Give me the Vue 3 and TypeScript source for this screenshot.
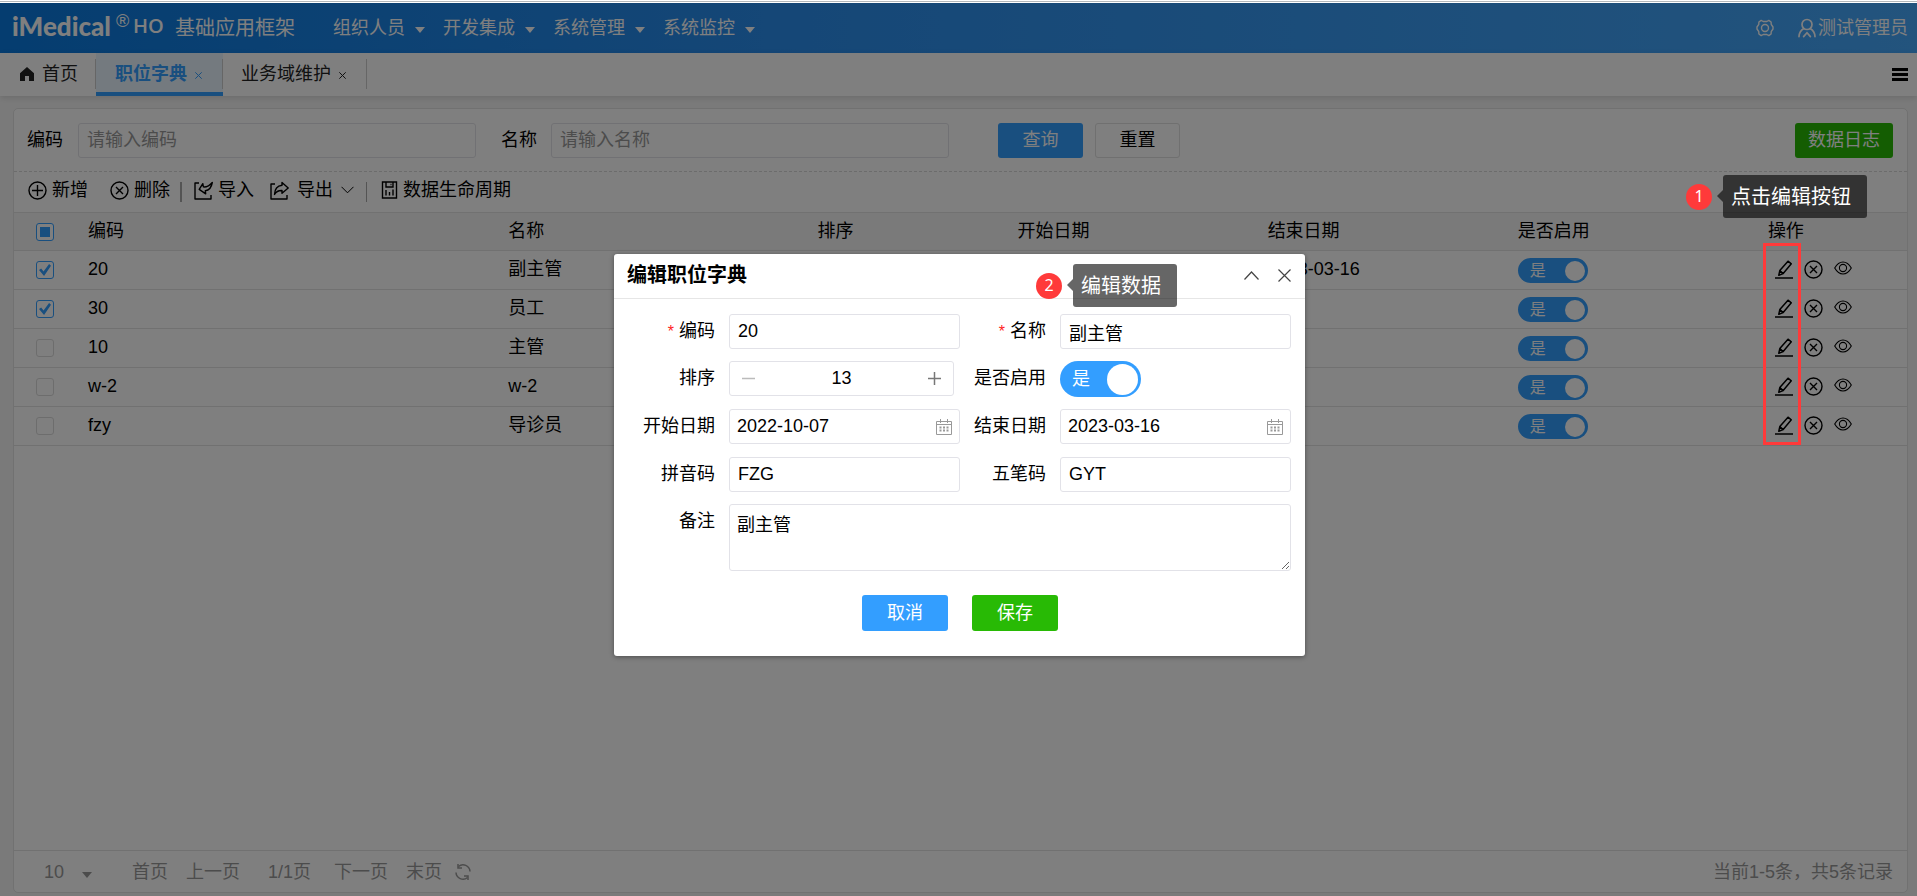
<script setup lang="ts">
import { ref, computed } from 'vue'

interface Row {
  code: string
  name: string
  sort: string
  start: string
  end: string
  enabled: boolean
  checked: boolean
}

const menus: string[] = ['组织人员', '开发集成', '系统管理', '系统监控']
const rows = ref<Row[]>([
  { code: '20', name: '副主管', sort: '13', start: '2022-10-07', end: '2023-03-16', enabled: true, checked: true },
  { code: '30', name: '员工', sort: '', start: '', end: '', enabled: true, checked: true },
  { code: '10', name: '主管', sort: '', start: '', end: '', enabled: true, checked: false },
  { code: 'w-2', name: 'w-2', sort: '', start: '', end: '', enabled: true, checked: false },
  { code: 'fzy', name: '导诊员', sort: '', start: '', end: '', enabled: true, checked: false }
])
const allChecked = computed(() => rows.value.every(r => r.checked))
const someChecked = computed(() => !allChecked.value && rows.value.some(r => r.checked))

const query = ref({ code: '', name: '' })
const form = ref({
  code: '20',
  name: '副主管',
  sort: 13,
  enabled: true,
  start: '2022-10-07',
  end: '2023-03-16',
  pinyin: 'FZG',
  wubi: 'GYT',
  remark: '副主管'
})
const pageSize = ref('10')
</script>

<template>
  <div class="edge"></div>
  <div class="app">
    <header class="topbar">
      <div class="logo"><b>iMedical</b><sup>®</sup><span>HO</span></div>
      <div class="product">基础应用框架</div>
      <nav class="menu">
        <a v-for="m in menus" :key="m" href="#">{{ m }}<i class="caret"></i></a>
      </nav>
      <button class="plain gear" aria-label="设置">
        <svg width="18" height="18" viewBox="0 0 18 18" fill="none" stroke="currentColor" stroke-width="1.4" stroke-linejoin="round">
          <path d="M5.200 1.400 7.200 2.500h3.600l2-1.100 2.300 1.600.1 2.300L17 8v2l-1.800 2.700-.1 2.300-2.300 1.600-2-1.100H7.200l-2 1.100L2.900 15l-.1-2.300L1 10V8l1.800-2.700.1-2.300z" />
          <circle cx="9" cy="9" r="3.500" />
        </svg>
      </button>
      <a class="user" href="#">
        <svg width="18" height="20" viewBox="0 0 18 20" fill="none" stroke="currentColor" stroke-width="1.7" stroke-linecap="round">
          <circle cx="9" cy="6.500" r="5" />
          <path d="M5.500 10.800C3 12.300 1.200 14.800 1 18.600M12.500 10.800c2.500 1.500 4.300 4 4.500 7.800M5.600 18.600 9 14.800l3.400 3.800" />
        </svg>测试管理员</a>
    </header>

    <div class="tabs">
      <a class="tab home" href="#">
        <svg width="14" height="14" viewBox="0 0 14 14"><path d="M7 0 0 6.200V14h5V9h4v5h5V6.200z" fill="currentColor" /></svg>首页</a>
      <a class="tab active" href="#">职位字典<svg width="7" height="7" viewBox="0 0 7 7" stroke="currentColor"><path d="M.3.300l6.400 6.400M6.700.300.300 6.700" /></svg></a>
      <a class="tab" href="#">业务域维护<svg width="7" height="7" viewBox="0 0 7 7" stroke="currentColor"><path d="M.3.300l6.400 6.400M6.700.300.300 6.700" /></svg></a>
      <button class="plain burger" aria-label="标签菜单">
        <svg width="16" height="14" viewBox="0 0 16 14"><path d="M0 0h16v3H0zM0 5h16v3H0zM0 10h16v3H0z" fill="currentColor" /></svg>
      </button>
    </div>

    <main class="panel">
      <form class="search" @submit.prevent>
        <label for="q-code">编码</label>
        <input id="q-code" v-model="query.code" type="text" placeholder="请输入编码">
        <label for="q-name" class="second">名称</label>
        <input id="q-name" v-model="query.name" type="text" placeholder="请输入名称">
        <button class="btn blue query" type="submit">查询</button>
        <button class="btn line" type="reset">重置</button>
        <button class="btn green log" type="button">数据日志</button>
      </form>

      <div class="tools">
        <button class="plain tool">
          <svg width="19" height="19" viewBox="0 0 19 19" fill="none" stroke="currentColor" stroke-width="1.400"><circle cx="9.500" cy="9.500" r="8.500" /><path d="M9.500 4v11M4 9.500h11" /></svg>新增</button>
        <button class="plain tool del">
          <svg width="19" height="19" viewBox="0 0 19 19" fill="none" stroke="currentColor" stroke-width="1.400"><circle cx="9.500" cy="9.500" r="8.500" /><path d="m6 6 7 7M13 6l-7 7" /></svg>删除</button>
        <i class="bar thick"></i>
        <button class="plain tool">
          <svg width="19" height="19" viewBox="0 0 19 19" fill="none" stroke="currentColor" stroke-width="1.400" stroke-linejoin="round"><path d="M5 2H1v16h16v-4" /><path d="M18.300 1.500c-1 5.500-3.500 8-7 8.300l.4 3L5.200 8.300l3.600-5.600.6 3.200c3 .3 6-1 8.900-4.400z" /></svg>导入</button>
        <button class="plain tool export">
          <svg width="19" height="19" viewBox="0 0 19 19" fill="none" stroke="currentColor" stroke-width="1.400" stroke-linejoin="round"><path d="M5 3H1v15h16v-4" /><path d="M12 1.500 18.200 7 12 12.300V9.500c-3.400-.2-5.700.8-7.500 4 .2-5.500 3-8.800 7.500-9.300z" /></svg>导出
          <svg width="13" height="8" viewBox="0 0 13 8" fill="none" stroke="currentColor"><path d="m.5.800 6 6 6-6" /></svg></button>
        <i class="bar"></i>
        <button class="plain tool">
          <svg width="17" height="18" viewBox="0 0 16 18" fill="none" stroke="currentColor" stroke-width="1.400"><path d="M1 1h14v16H1zM4.500 1v5h7V1M4.500 9v5.500M8 11v3.500M11.500 8.500v6M9 3.500h1" /></svg>数据生命周期</button>
      </div>

      <div class="grid">
        <table>
          <colgroup><col class="c0"><col class="c1"><col class="c2"><col class="c3"><col class="c4"><col class="c4"><col class="c4"><col class="c5"></colgroup>
          <thead>
            <tr>
              <th class="sel"><input type="checkbox" aria-label="全选" :checked="allChecked" :indeterminate.prop="someChecked"></th>
              <th>编码</th><th>名称</th><th>排序</th><th>开始日期</th><th>结束日期</th><th>是否启用</th><th>操作</th>
            </tr>
          </thead>
          <tbody>
            <tr v-for="r in rows" :key="r.code">
              <td class="sel"><input v-model="r.checked" type="checkbox" :aria-label="r.code"></td>
              <td>{{ r.code }}</td>
              <td>{{ r.name }}</td>
              <td>{{ r.sort }}</td>
              <td>{{ r.start }}</td>
              <td>{{ r.end }}</td>
              <td><label class="switch"><input v-model="r.enabled" type="checkbox"><span>是</span><i></i></label></td>
              <td>
                <div class="ops">
                  <button class="plain" aria-label="编辑">
                    <svg width="18" height="19" viewBox="0 0 18 19" fill="none" stroke="currentColor" stroke-width="1.500" stroke-linejoin="round"><path d="M0 18h18" /><path d="M13 1.200 16.300 3.800 8.200 13.600 3.800 15.200 4.800 10.600zM4.800 10.600l3.400 3" /></svg></button>
                  <button class="plain" aria-label="删除">
                    <svg width="19" height="19" viewBox="0 0 19 19" fill="none" stroke="currentColor" stroke-width="1.400"><circle cx="9.500" cy="9.500" r="8.500" /><path d="m6 6 7 7M13 6l-7 7" /></svg></button>
                  <button class="plain eye" aria-label="查看">
                    <svg width="18" height="14" viewBox="0 0 18 14" fill="none" stroke="currentColor" stroke-width="1.100"><path d="M.7 7C3 3 5.800 1 9 1s6 2 8.300 6C15 11 12.200 13 9 13S3 11 .7 7z" /><circle cx="9" cy="7" r="3.600" /></svg></button>
                </div>
              </td>
            </tr>
          </tbody>
        </table>
      </div>

      <footer class="pager">
        <select v-model="pageSize" aria-label="每页条数"><option>10</option><option>20</option><option>50</option></select>
        <i class="caret"></i>
        <button class="plain first">首页</button>
        <button class="plain">上一页</button>
        <span class="pages">1/1页</span>
        <button class="plain">下一页</button>
        <button class="plain">末页</button>
        <button class="plain reload" aria-label="刷新">
          <svg width="16" height="16" viewBox="0 0 16 16" fill="none" stroke="currentColor" stroke-width="1.500"><path d="M3.500 2.500A7 7 0 0 1 15 7.500M12.500 13.500A7 7 0 0 1 1 8.500" /><path d="M3 0v4h4M13 16v-4H9" /></svg></button>
        <span class="total">当前1-5条，共5条记录</span>
      </footer>
    </main>

    <div class="mask">
      <section class="dialog" role="dialog" aria-labelledby="dlg-title">
        <div class="dlg-head">
          <h2 id="dlg-title">编辑职位字典</h2>
          <button class="plain" aria-label="收起"><svg width="15" height="9" viewBox="0 0 15 9" fill="none" stroke="currentColor" stroke-width="1.200"><path d="m.5 8.500 7-7.500 7 7.500" /></svg></button>
          <button class="plain" aria-label="关闭"><svg width="13" height="13" viewBox="0 0 13 13" fill="none" stroke="currentColor" stroke-width="1.200"><path d="m.5.500 12 12M12.500.500l-12 12" /></svg></button>
        </div>
        <form class="dlg-form" @submit.prevent>
          <label for="f-code"><em>*</em>编码</label>
          <input id="f-code" v-model="form.code" type="text">
          <label for="f-name"><em>*</em>名称</label>
          <input id="f-name" v-model="form.name" type="text">

          <label for="f-sort">排序</label>
          <div class="spinner">
            <button type="button" class="plain minus" aria-label="减少"><svg width="13" height="13" viewBox="0 0 13 13" stroke="currentColor" stroke-width="1.500"><path d="M0 6.500h13" /></svg></button>
            <input id="f-sort" v-model="form.sort" type="text">
            <button type="button" class="plain" aria-label="增加"><svg width="13" height="13" viewBox="0 0 13 13" stroke="currentColor" stroke-width="1.500"><path d="M0 6.500h13M6.500 0v13" /></svg></button>
          </div>
          <label for="f-on">是否启用</label>
          <label class="switch big"><input id="f-on" v-model="form.enabled" type="checkbox"><span>是</span><i></i></label>

          <label for="f-start">开始日期</label>
          <div class="date"><input id="f-start" v-model="form.start" type="text">
            <svg width="16" height="16" viewBox="0 0 16 16" fill="none" stroke="currentColor"><path d="M.5 2.500h15v13H.5zM.5 5.500h15M4.500 0v4M11.500 0v4" /><path d="M3.500 8.500h9M3.500 11.500h9" stroke-width="2" stroke-dasharray="2 1.500" /></svg></div>
          <label for="f-end">结束日期</label>
          <div class="date"><input id="f-end" v-model="form.end" type="text">
            <svg width="16" height="16" viewBox="0 0 16 16" fill="none" stroke="currentColor"><path d="M.5 2.500h15v13H.5zM.5 5.500h15M4.500 0v4M11.500 0v4" /><path d="M3.500 8.500h9M3.500 11.500h9" stroke-width="2" stroke-dasharray="2 1.500" /></svg></div>

          <label for="f-py">拼音码</label>
          <input id="f-py" v-model="form.pinyin" type="text">
          <label for="f-wb">五笔码</label>
          <input id="f-wb" v-model="form.wubi" type="text">

          <label for="f-note">备注</label>
          <textarea id="f-note" v-model="form.remark"></textarea>

          <div class="actions">
            <button class="btn blue" type="button">取消</button>
            <button class="btn green" type="submit">保存</button>
          </div>
        </form>
        <div class="callout step-two"><b>2</b><span>编辑数据</span></div>
      </section>
    </div>

    <div class="callout step-one"><b>1</b><span>点击编辑按钮</span></div>
    <div class="focus-box"></div>
  </div>
</template>

<style>
html, body, #app { height: 100%; }
body { margin: 0; }
#app { display: flex; flex-direction: column; }
</style>

<style scoped>
* { box-sizing: border-box; }
.edge { flex: none; height: 3px; background: #fff; border-top: 1px solid #fff; box-shadow: inset 0 1px #b4b8bb; }
.app {
  position: relative; flex: 1; display: flex; flex-direction: column; min-height: 0;
  background: #f5f5f5; color: #000;
  font: 18px/24px "Liberation Sans", "Noto Sans CJK SC", sans-serif;
}
a { color: inherit; text-decoration: none; }
button, input, textarea, select { font: inherit; color: inherit; margin: 0; }
svg { display: block; flex: none; }
.plain { border: 0; padding: 0; background: none; }

.topbar {
  flex: none; height: 50px; display: flex; align-items: center; padding: 0 9px 0 12px; color: #fff;
  background: linear-gradient(to right, #0a7ae0, #2a8eee 40%, #46a8fb);
}
.logo { display: flex; align-items: center; width: 163px; height: 30px; margin-bottom: 4px; white-space: nowrap; }
.logo b { font: 900 26px/30px Lato, sans-serif; width: 104px; }
.logo sup { font: 18px/20px "Liberation Sans", sans-serif; width: 17px; align-self: flex-start; }
.logo span { font: 600 20px/30px "Open Sans", sans-serif; }
.product { font-size: 20px; width: 158px; white-space: nowrap; }
.menu { display: flex; gap: 18px; }
.menu a { display: flex; align-items: center; gap: 10px; }
.caret { border: 5px solid transparent; border-top: 6px solid; border-bottom: 0; }
.menu .caret { margin-top: 3px; }
.gear { margin-left: auto; margin-right: 24px; }
.user { display: flex; align-items: center; gap: 2px; white-space: nowrap; }

.tabs { flex: none; height: 43px; display: flex; background: #fff; box-shadow: 0 2px 6px rgba(0, 0, 0, .12); z-index: 1; }
.tab { position: relative; display: flex; align-items: center; padding: 0 21px 2px 18px; gap: 8px; color: #222; }
.tab::after { content: ""; position: absolute; right: 0; top: 6px; width: 1px; height: 30px; background: #ccc; }
.tab.home { padding: 0 18px 2px 20px; }
.tab.active { padding: 2px 21px 0 19px; border-bottom: 4px solid #339eff; background: #e8f4ff; color: #339eff; font-weight: 700; }
.tab:not(.home) svg { margin-top: 4px; }
.burger { margin-left: auto; padding: 0 9px; }

.panel { flex: 1; min-height: 0; margin: 12px 9px 3px 13px; display: flex; flex-direction: column; background: #fff; border: 1px solid #e2e2e2; border-radius: 5px; overflow: hidden; }
.search { flex: none; height: 63px; display: flex; align-items: center; padding: 0 14px 0 13px; border-bottom: 1px dashed #d8d8d8; }
.search label { width: 51px; white-space: nowrap; }
.search label.second { margin-left: 25px; width: 50px; }
.search input { flex: 0 1 398px; min-width: 0; }
input[type="text"], textarea { height: 35px; border: 1px solid #e2e2e8; border-radius: 3px; padding: 0 8px; background: #fff; outline: 0; }
.search input::placeholder { color: #999; opacity: 1; }
.btn { height: 35px; width: 85px; padding: 0; border: 0; border-radius: 3px; color: #fff; line-height: 33px; white-space: nowrap; }
.blue { background: #339eff; }
.green { background: #28ba05; }
.line { background: #fff; border: 1px solid #e0e0e0; color: #000; margin-left: 12px; }
.query { margin-left: 49px; }
.log { width: 98px; margin-left: auto; }

.tools { flex: none; height: 40px; display: flex; align-items: center; padding: 0 14px 4px; }
.tool { display: flex; align-items: center; gap: 5px; white-space: nowrap; }
.del { margin-left: 22px; }
.bar { width: 1px; height: 20px; margin: 3px 14px 0 12px; background: #a8a8a8; }
.bar.thick { width: 2px; margin: 3px 12px 0 10px; }
.export { margin-left: 16px; gap: 8px; }

.grid { flex: 1; min-height: 0; overflow: hidden; border-top: 1px solid #e2e2e2; }
table { width: 100%; table-layout: fixed; border-collapse: separate; border-spacing: 0; }
.c0 { width: 66px; } .c1 { width: 420px; } .c2 { width: 309px; } .c3 { width: 200px; } .c4 { width: 250px; } .c5 { width: 147px; }
th, td { padding: 0 8px 2px; text-align: left; font-weight: 400; border-bottom: 1px solid #e2e2e2; white-space: nowrap; }
th { height: 38px; background: #f5f5f5; }
td { height: 39px; }
.sel { padding: 0 0 0 22px; }
.sel input { appearance: none; display: grid; place-items: center; width: 18px; height: 18px; border: 1px solid #dadada; border-radius: 3px; background: #fff; }
.sel input:checked, .sel input:indeterminate { border-color: #339eff; }
.sel input:checked::before { content: ""; width: 12px; height: 12px; background: #339eff; clip-path: polygon(0 50%, 18% 38%, 38% 62%, 84% 0, 100% 14%, 42% 100%); }
.sel input:indeterminate::before { content: ""; width: 10px; height: 10px; background: #339eff; }
.switch { position: relative; display: flex; align-items: center; justify-content: space-between; width: 70px; height: 25px; border-radius: 18px; padding: 0 3px 0 12px; margin-top: 3px; background: #339eff; color: #fff; font-size: 16px; }
.switch input { position: absolute; inset: 0; margin: 0; opacity: 0; }
.switch i { width: 20px; height: 20px; border-radius: 50%; background: #fff; }
.ops { display: flex; align-items: center; padding-left: 7px; gap: 11px; }
.ops .eye { margin-bottom: 2px; }

.pager { flex: none; height: 42px; display: flex; align-items: center; padding: 0 14px 0 30px; border-top: 1px solid #e2e2e2; color: #999; white-space: nowrap; }
.pager select { appearance: none; border: 0; padding: 0; width: 38px; background: none; }
.pager .caret { margin-top: 6px; }
.pager .first { margin-left: 40px; }
.pager button { margin-right: 18px; }
.pages { margin: 0 23px 0 10px; }
.pager .reload { margin-left: -5px; }
.total { margin-left: auto; }

.mask { position: absolute; inset: 0; z-index: 10; display: flex; justify-content: center; align-items: flex-start; padding: 251px 0 0 2px; background: rgba(0, 0, 0, .5); }
.dialog { position: relative; width: 691px; padding-bottom: 25px; background: #fff; border-radius: 3px; box-shadow: 0 1px 5px rgba(0, 0, 0, .4); }
.dlg-head { display: flex; align-items: center; height: 45px; padding: 0 14px 2px 13px; border-bottom: 1px solid #e6e6e6; gap: 19px; color: #444; }
.dlg-head h2 { margin: 0 auto 0 0; font-size: 20px; line-height: 28px; color: #000; }
.dlg-form { display: grid; grid-template-columns: 100px minmax(0, 1fr) 100px minmax(0, 1fr); row-gap: 12px; align-items: start; padding: 15px 14px 0 15px; }
.dlg-form > label:not(.switch) { padding-right: 14px; text-align: right; line-height: 34px; height: 34px; white-space: nowrap; }
em { color: #f22; font-style: normal; font-size: 16px; margin-right: 5px; }
.dlg-form > input { width: 100%; }
.spinner { display: flex; align-items: center; height: 35px; width: 225px; padding: 0 12px; border: 1px solid #e2e2e8; border-radius: 3px; color: #777; }
.spinner input { flex: 1; min-width: 0; border: 0; height: 31px; text-align: center; color: #000; }
.minus { color: #bbb; }
.switch.big { width: 81px; height: 36px; font-size: 18px; margin: 0; }
.switch.big i { width: 31px; height: 31px; }
.date { display: flex; align-items: center; height: 35px; margin-bottom: 1px; padding-right: 7px; border: 1px solid #e2e2e8; border-radius: 3px; color: #999; }
.date input { flex: 1; min-width: 0; height: 31px; border: 0; padding: 0 7px; color: #000; }
textarea { grid-column: 2 / 5; width: 100%; height: 67px; padding: 8px 7px; resize: vertical; display: block; }
.actions { grid-column: 1 / 5; display: flex; justify-content: center; gap: 24px; padding-top: 12px; }
.actions .btn { width: 86px; height: 36px; }

.callout { position: absolute; display: flex; align-items: center; gap: 11px; color: #fff; font-size: 20px; white-space: nowrap; }
.callout b { width: 26px; height: 26px; border-radius: 50%; background: #ff3a3a; text-align: center; font: 16px/25px "Noto Sans", sans-serif; }
.callout span { position: relative; height: 43px; padding: 0 16px 0 8px; border-radius: 3px; background: rgba(0, 0, 0, .6); line-height: 45px; }
.callout span::before { content: ""; position: absolute; right: 100%; top: 15px; border: 6px solid transparent; border-left: 0; border-right-color: rgba(0, 0, 0, .6); }
.step-one { z-index: 20; right: 50px; top: 172px; }
.step-two { right: 128px; top: 10px; }
.focus-box { position: absolute; z-index: 20; right: 116px; top: 240px; width: 38px; height: 202px; border: 3px solid #ff3a3a; pointer-events: none; }
</style>
